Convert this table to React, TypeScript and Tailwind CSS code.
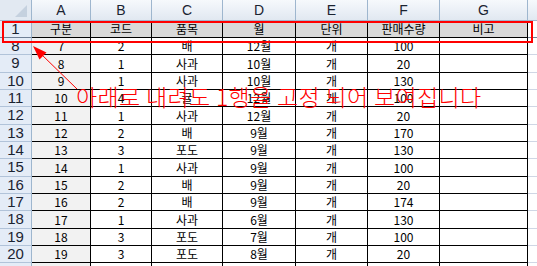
import React from "react";

const COLS = [
  { key: "A", w: 59, head: "구분" },
  { key: "B", w: 61, head: "코드" },
  { key: "C", w: 71, head: "품목" },
  { key: "D", w: 73, head: "월" },
  { key: "E", w: 72, head: "단위" },
  { key: "F", w: 72, head: "판매수량" },
  { key: "G", w: 88, head: "비고" },
];

const DATA: [number, string, string, string, string, string, string][] = [
  [8, "7", "2", "배", "12월", "개", "100"],
  [9, "8", "1", "사과", "10월", "개", "20"],
  [10, "9", "1", "사과", "10월", "개", "130"],
  [11, "10", "4", "귤", "12월", "개", "100"],
  [12, "11", "1", "사과", "12월", "개", "20"],
  [13, "12", "2", "배", "9월", "개", "170"],
  [14, "13", "3", "포도", "9월", "개", "130"],
  [15, "14", "1", "사과", "9월", "개", "100"],
  [16, "15", "2", "배", "9월", "개", "20"],
  [17, "16", "2", "배", "9월", "개", "174"],
  [18, "17", "1", "사과", "6월", "개", "130"],
  [19, "18", "3", "포도", "7월", "개", "100"],
  [20, "19", "3", "포도", "8월", "개", "20"],
  [21, "20", "4", "귤", "8월", "개", "170"],
];

const HEIGHTS = [17, 18, 17];

const cellFont = { fontFamily: '"Noto Sans CJK KR", "Liberation Sans", sans-serif' };
const hdrFont = { fontFamily: '"Liberation Sans", "Noto Sans CJK KR", sans-serif' };

export default function App() {
  return (
    <div className="relative w-[537px] h-[266px] overflow-hidden bg-white">
      {/* column header row */}
      <div className="flex h-[21px]">
        <div className="relative w-[32px] h-[21px] shrink-0 border-r border-b border-[#9eb6ce] bg-[#e2e9f2]">
          <svg className="absolute left-0 top-0" width="31" height="20" viewBox="0 0 31 20">
            <polygon points="27,5 27,17 15,17" fill="#c5d1df" />
          </svg>
        </div>
        {COLS.map((c) => (
          <div
            key={c.key}
            style={{ width: c.w, ...hdrFont }}
            className="shrink-0 h-[21px] border-r border-b border-[#9eb6ce] bg-gradient-to-b from-[#f6f9fc] to-[#e1e8f1] flex items-center justify-center text-[14px] text-[#1b2331]"
          >
            {c.key}
          </div>
        ))}
        <div className="flex-1 h-[21px] border-b border-[#9eb6ce] bg-gradient-to-b from-[#f6f9fc] to-[#e1e8f1]" />
      </div>

      {/* row 1 (frozen) */}
      <div className="flex h-[17px]">
        <div
          style={hdrFont}
          className="w-[32px] shrink-0 h-[17px] border-r border-b border-r-[#9eb6ce] border-b-[#6f7f95] bg-[#e4ecf7] flex items-center justify-center text-[15px] text-[#1b2331]"
        >
          1
        </div>
        {COLS.map((c) => (
          <div
            key={c.key}
            style={{ width: c.w, ...cellFont }}
            className="shrink-0 h-[17px] border-r border-b border-black bg-[#d9d9d9] flex items-center justify-center text-[12px] text-black"
          >
            {c.head}
          </div>
        ))}
        <div className="flex-1 h-[17px] border-b border-[#6f7f95]" />
      </div>

      {/* data rows */}
      {DATA.map((row, i) => {
        const h = HEIGHTS[i % 3];
        return (
          <div key={row[0]} className="flex" style={{ height: h }}>
            <div
              style={hdrFont}
              className="w-[32px] shrink-0 h-full border-r border-b border-r-[#9eb6ce] border-b-[#b1c3d9] bg-[#e4ecf7] flex items-center justify-center text-[15px] text-[#1b2331]"
            >
              {row[0]}
            </div>
            {COLS.map((c, j) => (
              <div
                key={c.key}
                style={{ width: c.w, ...cellFont }}
                className={
                  "shrink-0 h-full border-r border-b border-black flex items-center justify-center text-[12px] text-black " +
                  (j === 0 ? "bg-[#f2f2f2]" : "bg-white")
                }
              >
                {j < 6 ? row[j + 1] : ""}
              </div>
            ))}
            <div className="flex-1 h-full border-b border-[#d0d7e5]" />
          </div>
        );
      })}

      {/* red frame around row 1 */}
      <div className="absolute left-[2px] top-[21px] w-[531px] h-[22px] border-2 border-[#ff0000]" />

      {/* arrow */}
      <svg className="absolute left-0 top-0" width="537" height="266" viewBox="0 0 537 266">
        <line x1="40" y1="53" x2="77" y2="89" stroke="#ff0000" strokeWidth="1" />
        <polygon points="33,46 39.5,59.5 46.5,52.5" fill="#ff0000" />
      </svg>

      {/* annotation */}
      <div
        style={cellFont}
        className="absolute left-[76px] top-[85px] whitespace-nowrap text-[23px] tracking-[0.35px] font-light leading-none text-[#ff0000]"
      >
        아래로 내려도 1행을 고정 되어 보여집니다
      </div>
    </div>
  );
}
